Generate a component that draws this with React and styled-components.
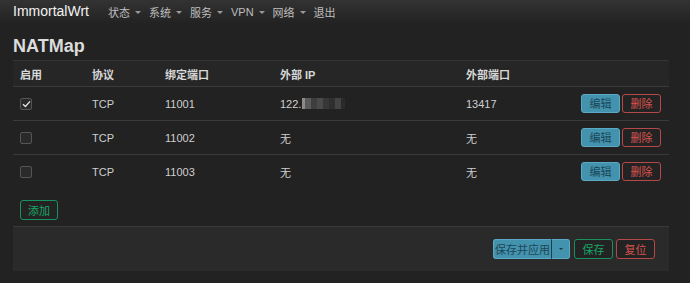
import React from 'react'
import styled, { createGlobalStyle } from 'styled-components'

const Global = createGlobalStyle`
  html, body { margin: 0; padding: 0; background: #222222; }
  body {
    font-family: "Liberation Sans", Arial, "Noto Sans CJK SC", sans-serif;
    font-size: 11px;
    color: #cfcfcf;
    min-height: 283px;
  }
`

const Header = styled.header`
  height: 24px;
  display: flex;
  align-items: center;
  padding-left: 13px;
  background: linear-gradient(#333333, #222222);
`

const Brand = styled.div`
  font-size: 14px;
  color: #f2f2f2;
  margin-right: 19px;
  margin-top: -2px;
`

const NavItem = styled.div`
  display: flex;
  align-items: center;
  gap: 3px;
  font-size: 11px;
  color: #bfbfbf;
  margin-right: 8px;
  font-family: "Liberation Sans", "Noto Sans CJK SC", sans-serif;
`

const Caret = styled.span`
  width: 0;
  height: 0;
  border-left: 3px solid transparent;
  border-right: 3px solid transparent;
  border-top: 3px solid #9a9a9a;
  margin-left: 2px;
`

const Main = styled.main`
  padding: 0 21px 0 13px;
`

const Title = styled.h2`
  margin: 12px 0 4px;
  line-height: 20px;
  font-size: 18px;
  font-weight: bold;
  color: #dcdcdc;
`

const Table = styled.div`
  border-top: 1px solid #353535;
`

const Row = styled.div`
  display: grid;
  grid-template-columns: 72px 73px 115px 186px 1fr auto;
  align-items: center;
  height: ${p => (p.head ? '25px' : '33px')};
  background: ${p => (p.head ? '#262626' : 'transparent')};
  border-bottom: ${p => (p.last ? 'none' : '1px solid #3a3a3a')};
`

const Cell = styled.div`
  padding-left: 7px;
  color: ${p => (p.head ? '#d8d8d8' : '#cfcfcf')};
  font-weight: ${p => (p.head ? 'bold' : 'normal')};
  font-family: "Liberation Sans", "Noto Sans CJK SC", sans-serif;
  display: flex;
  align-items: center;
`

const Actions = styled.div`
  display: flex;
  gap: 2px;
  padding-right: 8px;
`

const Box = styled.span`
  width: 10px;
  height: 10px;
  border: 1px solid #555555;
  border-radius: 2px;
  background: #2a2a2a;
  display: inline-flex;
  align-items: center;
  justify-content: center;
`

const Blur = styled.span`
  display: inline-flex;
  height: 11px;
  margin-left: 1px;
`

const Px = styled.span`
  width: ${p => p.w}px;
  height: 11px;
  background: ${p => p.c};
`

const Btn = styled.button`
  font-family: "Noto Sans CJK SC", sans-serif;
  font-size: 11px;
  height: ${p => p.h || 19}px;
  width: ${p => p.w || 39}px;
  padding: 0;
  border-radius: 3px;
  cursor: pointer;
  line-height: 1;
  white-space: nowrap;
  display: inline-flex;
  align-items: center;
  justify-content: center;
  background: ${p => (p.kind === 'info' ? '#4392ae' : '#232323')};
  border: 1px solid
    ${p => (p.kind === 'info' ? '#5aaac6' : p.kind === 'ok' ? '#16915f' : '#b5494a')};
  color: ${p => (p.kind === 'info' ? '#1c4756' : p.kind === 'ok' ? '#17a868' : '#d9534f')};
`

const AddWrap = styled.div`
  padding: 12px 0 6px 7px;
`

const Footer = styled.div`
  height: 44px;
  background: #2a2a2a;
  border-top: 1px solid #3a3a3a;
  display: flex;
  align-items: center;
  justify-content: flex-end;
  gap: 3px;
  padding-right: 14px;
`

const Split = styled.div`
  display: flex;
  margin-right: 1px;
`

const SplitMain = styled(Btn)`
  border-radius: 3px 0 0 3px;
  border-right: 1px solid #1f3e49;
`

const SplitCaret = styled(Btn)`
  border-radius: 0 3px 3px 0;
  border-left: none;
`

const MiniCaret = styled.span`
  border-left: 2px solid transparent;
  border-right: 2px solid transparent;
  border-top: 2px solid #1c3a44;
`

const Check = () => (
  <svg width="9" height="8" viewBox="0 0 9 8">
    <path d="M1 4.2 L3.4 6.4 L8 1.4" fill="none" stroke="#e0e0e0" strokeWidth="1.4" />
  </svg>
)

const rows = [
  { on: true, port: '11001', ip: 'blur', ext: '13417' },
  { on: false, port: '11002', ip: '无', ext: '无' },
  { on: false, port: '11003', ip: '无', ext: '无' }
]

export default function App() {
  return (
    <>
      <Global />
      <Header>
        <Brand>ImmortalWrt</Brand>
        {['状态', '系统', '服务', 'VPN', '网络'].map(n => (
          <NavItem key={n}>
            {n}
            <Caret />
          </NavItem>
        ))}
        <NavItem>退出</NavItem>
      </Header>
      <Main>
        <Title>NATMap</Title>
        <Table>
          <Row head>
            <Cell head>启用</Cell>
            <Cell head>协议</Cell>
            <Cell head>绑定端口</Cell>
            <Cell head>外部 IP</Cell>
            <Cell head>外部端口</Cell>
            <Cell />
          </Row>
          {rows.map((r, i) => (
            <Row key={r.port} last={i === rows.length - 1}>
              <Cell>
                <Box>{r.on && <Check />}</Box>
              </Cell>
              <Cell>TCP</Cell>
              <Cell>{r.port}</Cell>
              <Cell>
                {r.ip === 'blur' ? (
                  <>
                    122.
                    <Blur>
                      <Px w={3} c="#8a8a8a" />
                      <Px w={6} c="#5a5a5a" />
                      <Px w={6} c="#3e3e3e" />
                      <Px w={6} c="#4a4a4a" />
                      <Px w={6} c="#373737" />
                      <Px w={6} c="#2f2f2f" />
                      <Px w={6} c="#444444" />
                      <Px w={4} c="#2a2a2a" />
                    </Blur>
                  </>
                ) : (
                  r.ip
                )}
              </Cell>
              <Cell>{r.ext}</Cell>
              <Actions>
                <Btn kind="info">编辑</Btn>
                <Btn kind="danger">删除</Btn>
              </Actions>
            </Row>
          ))}
        </Table>
        <AddWrap>
          <Btn kind="ok" h={20} w={38}>添加</Btn>
        </AddWrap>
        <Footer>
          <Split>
            <SplitMain kind="info" h={20} w={59}>保存并应用</SplitMain>
            <SplitCaret kind="info" h={20} w={18}>
              <MiniCaret />
            </SplitCaret>
          </Split>
          <Btn kind="ok" h={20} w={39}>保存</Btn>
          <Btn kind="danger" h={20} w={39}>复位</Btn>
        </Footer>
      </Main>
    </>
  )
}
